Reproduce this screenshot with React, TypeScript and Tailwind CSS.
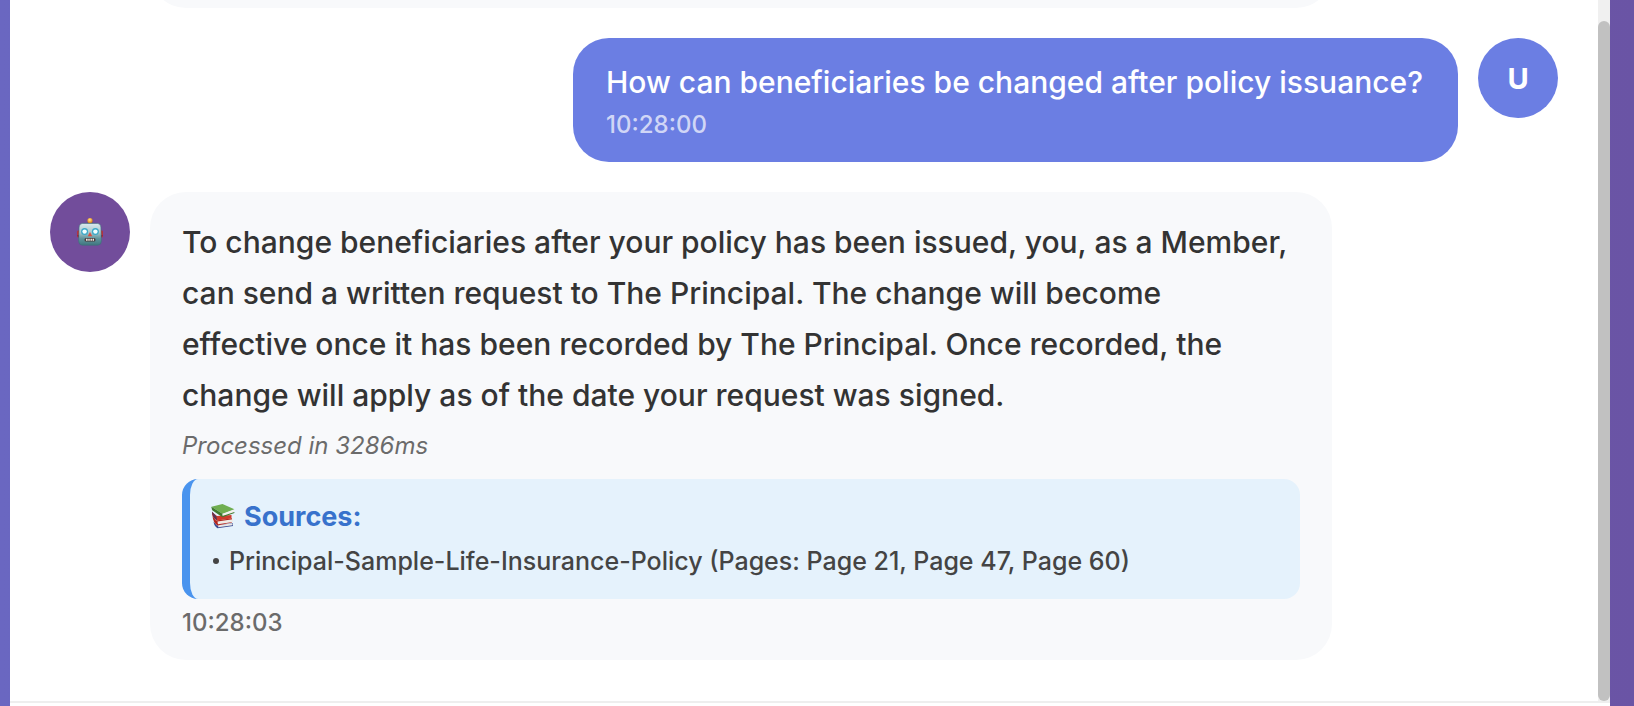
import React from "react";

function RobotIcon() {
  return (
    <svg viewBox="0 0 26 28" className="h-[28px] w-[26px]" role="img" aria-label="Assistant">
      <defs>
        <linearGradient id="face" x1="0" y1="0" x2="0" y2="1">
          <stop offset="0" stopColor="#dcebee" />
          <stop offset="0.4" stopColor="#a9c9cf" />
          <stop offset="0.7" stopColor="#5f939b" />
          <stop offset="1" stopColor="#3f7780" />
        </linearGradient>
        <radialGradient id="bulb" cx="0.45" cy="0.35" r="0.7">
          <stop offset="0" stopColor="#ffe98a" />
          <stop offset="0.6" stopColor="#f0a030" />
          <stop offset="1" stopColor="#c06a18" />
        </radialGradient>
      </defs>
      <path d="M9.500 6Q10 4 13 4T16.500 6Z" fill="#4d5f80" />
      <circle cx="13" cy="2.700" r="2.600" fill="url(#bulb)" />
      <rect x="0.200" y="12.500" width="3" height="7" rx="1.300" fill="#c22b2b" />
      <rect x="22.800" y="12.500" width="3" height="7" rx="1.300" fill="#c22b2b" />
      <path d="M0.500 17H3V19.500H1.500ZM25.500 17H23V19.500H24.500Z" fill="#6b1230" />
      <path d="M5.500 5.400H20.500Q23.600 5.400 23.900 9L24.400 23Q24.300 27 20.800 27.200H5.200Q1.700 27 1.600 23L2.100 9Q2.400 5.400 5.500 5.400Z" fill="url(#face)" stroke="#3d6f7b" strokeWidth="0.600" />
      <circle cx="7.600" cy="13.600" r="3.500" fill="#3ba9c9" />
      <circle cx="18.400" cy="13.600" r="3.500" fill="#3ba9c9" />
      <circle cx="7.600" cy="13.600" r="2.200" fill="#f2ffff" />
      <circle cx="18.400" cy="13.600" r="2.200" fill="#f2ffff" />
      <path d="M13 14L15.200 18.200H10.800Z" fill="#df4b3c" />
      <rect x="7.500" y="20" width="11" height="3.400" rx="1.500" fill="#4b3b3d" />
      <path d="M9 20.700H10.600V22.800H9ZM11.300 20.700H12.700V22.800H11.300ZM13.500 20.700H14.900V22.800H13.500ZM15.600 20.700H17V22.800H15.600Z" fill="#f2efe6" />
    </svg>
  );
}

function BooksIcon() {
  return (
    <svg viewBox="0 0 24 26" className="mb-[3px] h-[26px] w-[24px]" aria-hidden="true">
      <path d="M2.500 18.500L6 22.500L22 20V23L6.500 25.200Q3 23 2.500 18.500Z" fill="#3b4b93" />
      <path d="M7 22.300L21.500 20.300V22.300L7.300 24.200Z" fill="#e9e7e6" />
      <path d="M1.500 13L5 17.500L21 15.300V19.500L6.500 22.400Q2 19.500 1.500 13Z" fill="#b3261e" />
      <path d="M6.500 18.400L21.800 16.300V18.900L7 21.200Z" fill="#efebe6" />
      <path d="M1 9L6 13L20.500 12V15.500L6 17.500Q0.500 14.500 1 9Z" fill="#cf3a2b" />
      <path d="M1 8.500L5.500 13.400L6 17.500Q0.800 14 1 8.500Z" fill="#5a3152" />
      <path d="M0.500 3.800L11.500 1L23.400 6.200L11.500 10.800Z" fill="#6fae50" />
      <path d="M0.500 3.800L11.500 10.800V14.200L1.600 7.400Q0.300 5.500 0.500 3.800Z" fill="#3f7a2e" />
      <path d="M11.700 10.900L23 6.700V9L11.900 13Z" fill="#f3f1ec" />
      <path d="M11.500 13L23.400 8.900V9.900L11.500 14.200Z" fill="#3f7a2e" />
    </svg>
  );
}

function Time({ children, className }: { children: string; className: string }) {
  return <time className={`mt-[10px] block text-[24px] leading-[28px] ${className}`}>{children}</time>;
}

export default function App() {
  return (
    <div className="flex min-h-screen flex-col bg-linear-to-r from-[#6a67c1] to-[#6a54a5] pr-6 pl-[10px] font-['Inter','Liberation_Sans',sans-serif] font-medium">
      <main className="flex grow flex-col bg-white">
        <div className="flex">
          <section aria-label="Conversation" className="flex grow flex-col gap-[30px] pr-10 pb-[41px] pl-10">
            <div className="flex h-2 items-end overflow-hidden pl-[100px]">
              <div className="h-[100px] w-full max-w-[1182px] shrink-0 rounded-[36px] bg-[#f8f9fb]" />
            </div>

            <article className="flex items-start justify-end gap-5">
              <div className="w-full max-w-[885px] rounded-[36px] bg-[#6b7ee3] px-[33px] pt-[25px] pb-[23px] text-white">
                <p className="text-[30px] leading-[38px]">How can beneficiaries be changed after policy issuance?</p>
                <Time className="text-white/70">10:28:00</Time>
              </div>
              <div className="flex size-20 shrink-0 items-center justify-center rounded-full bg-[#6b7ee3] pt-[2px] text-[29px] font-bold text-white">
                U
              </div>
            </article>

            <article className="flex items-start gap-5">
              <div className="flex size-20 shrink-0 items-center justify-center rounded-full bg-[#724d9b]">
                <RobotIcon />
              </div>
              <div className="w-full max-w-[1182px] rounded-[36px] bg-[#f8f9fb] px-8 pt-[25px] pb-[23px] text-[#333]">
                <p className="text-[30px] leading-[51px]">
                  To change beneficiaries after your policy has been issued, you, as a Member, can send a written
                  request to The Principal. The change will become
                  <br />
                  effective once it has been recorded by The Principal. Once recorded, the change will apply as of
                  the date your request was signed.
                </p>
                <p className="mt-[11px] text-[24px] leading-[28px] font-normal text-[#6b6b6b] italic">
                  Processed in 3286ms
                </p>
                <section className="mt-[19px] rounded-2xl border-l-8 border-[#4a94ee] bg-[#e5f2fc] px-[21px] py-5">
                  <h2 className="flex items-center gap-[9px] text-[27px] leading-[36px] font-bold text-[#3872cc]">
                    <BooksIcon />
                    Sources:
                  </h2>
                  <ul className="mt-2 text-[25px] leading-[36px] text-[#444]">
                    <li className="flex items-center gap-[10px]">
                      <span className="ml-[2px] size-[6px] shrink-0 rounded-full bg-[#444]" />
                      Principal-Sample-Life-Insurance-Policy (Pages: Page 21, Page 47, Page 60)
                    </li>
                  </ul>
                </section>
                <Time className="text-[#6b6b6b]">10:28:03</Time>
              </div>
            </article>
          </section>
          <div className="flex w-3 shrink-0 flex-col bg-[#f0f0f0] pt-[21px]">
            <div className="grow rounded-full bg-[#c1c1c1]" />
          </div>
        </div>
        <footer className="grow border-t-2 border-[#eee]" />
      </main>
    </div>
  );
}
